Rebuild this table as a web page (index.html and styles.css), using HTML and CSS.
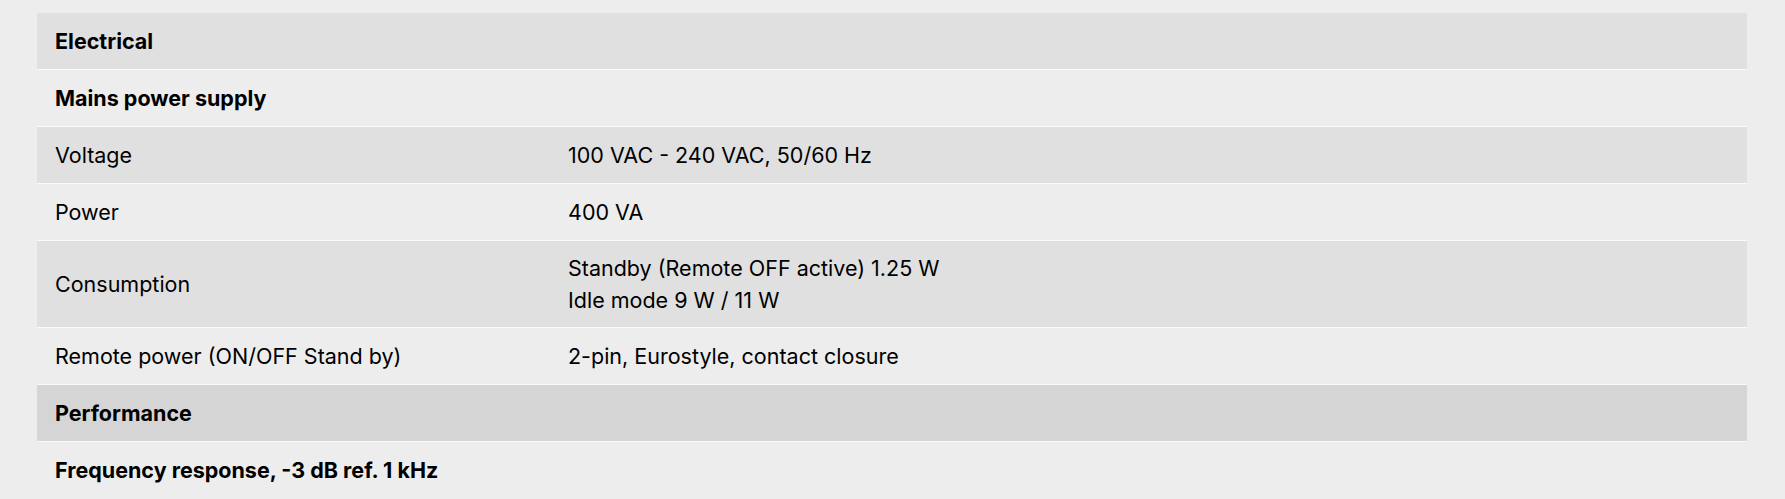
FILE: index.html
```html
<!DOCTYPE html>
<html lang="en">
<head>
<meta charset="utf-8">
<title>Specifications</title>
<link rel="stylesheet" href="styles.css">
</head>
<body>
<div class="specs">
  <div class="spec-row spec-group"><div class="spec-head">Electrical</div></div>
  <div class="spec-row spec-sub"><div class="spec-head">Mains power supply</div></div>
  <div class="spec-row spec-shade"><div class="label">Voltage</div><div class="value">100 VAC - 240 VAC, 50/60 Hz</div></div>
  <div class="spec-row spec-plain"><div class="label">Power</div><div class="value">400 VA</div></div>
  <div class="spec-row spec-shade"><div class="label">Consumption</div><div class="value value-lines"><div>Standby (Remote OFF active) 1.25 W</div><div>Idle mode 9 W / 11 W</div></div></div>
  <div class="spec-row spec-plain"><div class="label">Remote power (ON/OFF Stand by)</div><div class="value">2-pin, Eurostyle, contact closure</div></div>
  <div class="spec-row spec-group spec-dark"><div class="spec-head">Performance</div></div>
  <div class="spec-row spec-sub spec-last"><div class="spec-head">Frequency response, -3 dB ref. 1 kHz</div></div>
</div>
</body>
</html>
```

FILE: styles.css
```css
html, body {
  margin: 0;
  padding: 0;
  background: #ededed;
}

body {
  font-family: Inter, "Liberation Sans", Arial, sans-serif;
  color: #000;
}

.specs {
  padding: 13px 38px 0 37px;
  display: flex;
  flex-direction: column;
}

.spec-row {
  display: grid;
  grid-template-columns: 30% 70%;
  align-items: center;
  border-bottom: 1px solid #fafafa;
  font-size: 21.5px;
  line-height: 30px;
}

.spec-head,
.label,
.value {
  padding: 13px 16px 13px 18px;
}

.value-lines {
  display: flex;
  flex-direction: column;
  gap: 2px;
  padding-top: 12px;
  padding-bottom: 12px;
}

.spec-head {
  grid-column: 1 / -1;
  font-weight: 700;
}

.label,
.value {
  font-weight: 400;
}

.spec-group {
  background: #e0e0e0;
}

.spec-dark {
  background: #d5d5d5;
}

.spec-sub,
.spec-plain {
  background: #ededed;
}

.spec-shade {
  background: #e0e0e0;
}

.spec-last {
  border-bottom-color: transparent;
}
```
